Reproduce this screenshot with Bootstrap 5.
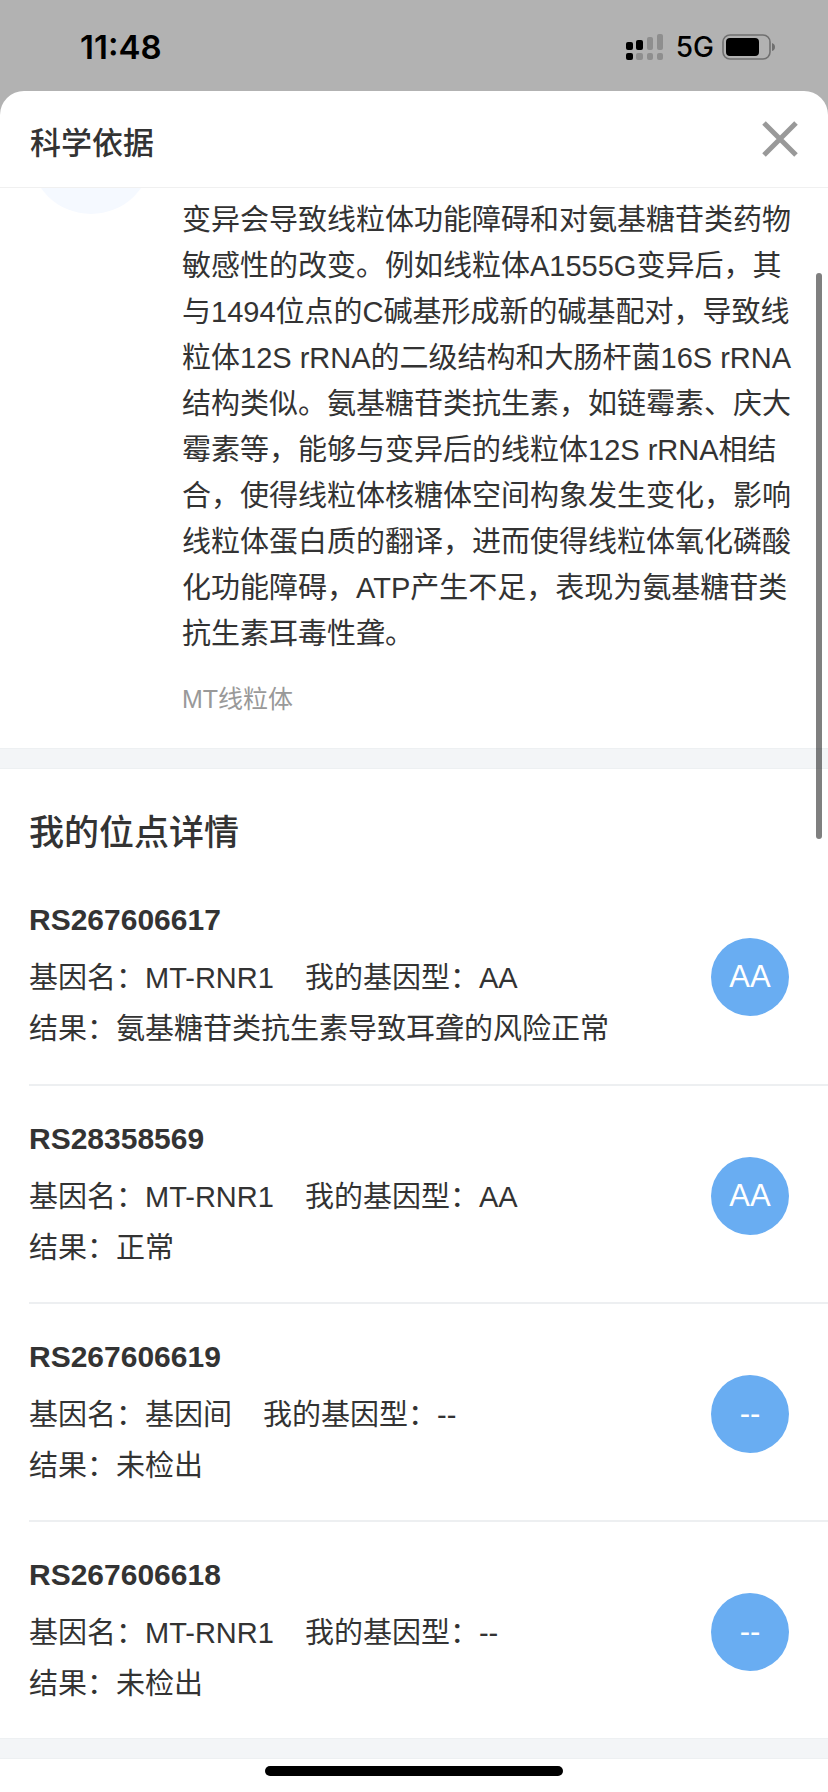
<!DOCTYPE html>
<html lang="zh-CN">
<head>
<meta charset="utf-8">
<meta name="viewport" content="width=device-width, initial-scale=1">
<title>科学依据</title>
<link href="https://cdn.jsdelivr.net/npm/bootstrap@5.3.0/dist/css/bootstrap.min.css" rel="stylesheet">
<style>
  body { background: #b2b2b2; color: #333; font-family: "Liberation Sans", "Noto Sans CJK SC", sans-serif; font-size: 29px; line-height: 46px; }
  .status-bar { height: 91px; padding: 2px 52px 0 80px; color: #000; font-family: Inter, sans-serif; }
  .clock { font-size: 33px; font-weight: 600; }
  .network { font-size: 28px; font-weight: 500; }
  .sheet { border-radius: 24px 24px 0 0; }
  .sheet-head { height: 97px; padding: 0 30px; border-bottom: 1px solid #f0f0f0; }
  .sheet-title { font-size: 31px; font-weight: 500; line-height: 46px; padding-top: 10px; }
  .close-btn { line-height: 0; color: #999; }
  .intro { padding: 0 30px 29px; gap: 30px; }
  .intro-icon { width: 122px; height: 26px; }
  .intro-icon span { width: 122px; height: 122px; background: #f5f9ff; }
  .intro-text { padding-top: 9px; }
  .intro-tag { font-size: 25px; line-height: 40px; color: #999; margin-top: 22px; }
  .divider { height: 21px; background: #f3f5f7; border: solid #edf0f2; border-width: 1px 0; }
  .section-title { font-size: 35px; font-weight: 500; line-height: 50px; padding: 39px 29px 8px; }
  .sites { margin-left: 29px; }
  .site { min-height: 218px; padding: 32px 39px 28px 0; }
  .site + .site { border-top: 2px solid #edeff1; }
  .site-id { font-size: 30px; font-weight: 700; line-height: 42px; margin-bottom: 12px; }
  .site-line { line-height: 51px; column-gap: 31px; }
  .genotype { width: 78px; height: 78px; background: #69adf2; font-size: 31px; }
  .home-area { height: 33px; padding-top: 7px; }
  .home-bar { width: 36%; height: 10px; background: #000; }
  .scroll-thumb { top: 182px; right: 6px; width: 6px; height: 566px; background: rgba(0, 0, 0, .5); }
</style>
</head>
<body>
<div class="min-vh-100 d-flex flex-column">
  <header class="status-bar d-flex align-items-center justify-content-between">
    <span class="clock">11:48</span>
    <div class="d-flex align-items-center">
      <svg width="38" height="28" viewBox="0 0 38 28" aria-hidden="true">
        <g fill="#8e8e8e">
          <rect x="21" y="4" width="6" height="13" rx="2"/><rect x="31" y="1" width="6" height="16" rx="2"/>
          <rect x="10" y="20" width="7" height="7" rx="2"/><rect x="21" y="20" width="6" height="7" rx="2"/><rect x="31" y="20" width="6" height="7" rx="2"/>
        </g>
        <rect y="9" width="7" height="8" rx="2"/><rect x="10" y="7" width="7" height="10" rx="2"/><rect y="20" width="7" height="7" rx="2"/>
      </svg>
      <span class="network mx-2 ps-1">5G</span>
      <svg width="54" height="26" viewBox="0 0 54 26" aria-hidden="true">
        <rect x="1" y="1" width="47" height="24" rx="7" fill="none" stroke="#707070" stroke-width="1.6"/>
        <rect x="4" y="4" width="33" height="18" rx="4"/>
        <path d="M50 9q3 1 3 4t-3 4z" fill="#707070"/>
      </svg>
    </div>
  </header>

  <main class="sheet bg-white position-relative flex-grow-1 d-flex flex-column">
    <div class="sheet-head d-flex align-items-center justify-content-between">
      <h1 class="sheet-title mb-0">科学依据</h1>
      <button type="button" class="close-btn btn p-0 border-0" aria-label="关闭">
        <svg width="37" height="36" viewBox="0 0 37 36"><path d="M3 2l32 32M35 2L3 34" stroke="#999" stroke-width="5" fill="none"/></svg>
      </button>
    </div>

    <section class="intro d-flex">
      <div class="intro-icon flex-shrink-0 overflow-hidden d-flex align-items-end"><span class="rounded-circle flex-shrink-0"></span></div>
      <div class="intro-text">
        <p class="mb-0">变异会导致线粒体功能障碍和对氨基糖苷类药物敏感性的改变。例如线粒体A1555G变异后，其与1494位点的C碱基形成新的碱基配对，导致线粒体12S rRNA的二级结构和大肠杆菌16S rRNA结构类似。氨基糖苷类抗生素，如链霉素、庆大霉素等，能够与变异后的线粒体12S rRNA相结合，使得线粒体核糖体空间构象发生变化，影响线粒体蛋白质的翻译，进而使得线粒体氧化磷酸化功能障碍，ATP产生不足，表现为氨基糖苷类抗生素耳毒性聋。</p>
        <p class="intro-tag mb-0">MT线粒体</p>
      </div>
    </section>

    <div class="divider"></div>

    <section>
      <h2 class="section-title mb-0">我的位点详情</h2>
      <ul class="sites list-unstyled mb-0">
        <li class="site d-flex align-items-center justify-content-between">
          <div>
            <h3 class="site-id">RS267606617</h3>
            <div class="site-line d-flex"><span>基因名：MT-RNR1</span><span>我的基因型：AA</span></div>
            <div class="site-line">结果：氨基糖苷类抗生素导致耳聋的风险正常</div>
          </div>
          <span class="genotype rounded-circle text-white d-flex align-items-center justify-content-center">AA</span>
        </li>
        <li class="site d-flex align-items-center justify-content-between">
          <div>
            <h3 class="site-id">RS28358569</h3>
            <div class="site-line d-flex"><span>基因名：MT-RNR1</span><span>我的基因型：AA</span></div>
            <div class="site-line">结果：正常</div>
          </div>
          <span class="genotype rounded-circle text-white d-flex align-items-center justify-content-center">AA</span>
        </li>
        <li class="site d-flex align-items-center justify-content-between">
          <div>
            <h3 class="site-id">RS267606619</h3>
            <div class="site-line d-flex"><span>基因名：基因间</span><span>我的基因型：--</span></div>
            <div class="site-line">结果：未检出</div>
          </div>
          <span class="genotype rounded-circle text-white d-flex align-items-center justify-content-center">--</span>
        </li>
        <li class="site d-flex align-items-center justify-content-between">
          <div>
            <h3 class="site-id">RS267606618</h3>
            <div class="site-line d-flex"><span>基因名：MT-RNR1</span><span>我的基因型：--</span></div>
            <div class="site-line">结果：未检出</div>
          </div>
          <span class="genotype rounded-circle text-white d-flex align-items-center justify-content-center">--</span>
        </li>
      </ul>
    </section>

    <div class="divider"></div>
    <footer class="home-area"><div class="home-bar rounded-pill mx-auto"></div></footer>
    <div class="scroll-thumb position-absolute rounded-pill"></div>
  </main>
</div>
<script src="https://cdn.jsdelivr.net/npm/bootstrap@5.3.0/dist/js/bootstrap.bundle.min.js"></script>
</body>
</html>
